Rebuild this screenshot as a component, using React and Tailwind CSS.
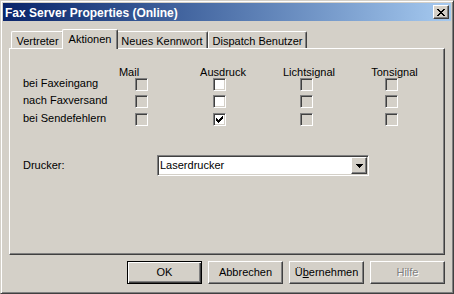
import React from "react";

const raised =
  "border border-t-white border-l-white border-r-[#404040] border-b-[#404040] shadow-[inset_-1px_-1px_#808080]";

function CloseGlyph() {
  const rows = [
    [0, 1, 6, 7],
    [1, 2, 5, 6],
    [2, 3, 4, 5],
    [3, 4],
    [2, 3, 4, 5],
    [1, 2, 5, 6],
    [0, 1, 6, 7],
  ];
  return (
    <svg width="8" height="7" viewBox="0 0 8 7" shapeRendering="crispEdges">
      {rows.map((r, y) =>
        r.map((x) => <rect key={y + "-" + x} x={x} y={y} width="1" height="1" fill="#000" />)
      )}
    </svg>
  );
}

function Checkbox({ checked, disabled }) {
  return (
    <div
      className={
        "w-[13px] h-[13px] border border-t-[#808080] border-l-[#808080] border-r-white border-b-white shadow-[inset_1px_1px_#404040,inset_-1px_-1px_#d4d0c8] flex items-center justify-center " +
        (disabled ? "bg-[#d4d0c8]" : "bg-white")
      }
    >
      {checked && (
        <svg width="7" height="7" viewBox="0 0 7 7" shapeRendering="crispEdges">
          <path
            d="M0 2v3h1v1h1v1h1v-1h1v-1h1v-1h1v-1h1v-3h-1v1h-1v1h-1v1h-1v1h-1v-1h-1v-1h-1z"
            fill="#000"
          />
        </svg>
      )}
    </div>
  );
}

function Tab({ label, width, active }) {
  if (active) {
    return (
      <div
        className={
          "relative z-10 -mx-[2px] -mb-[1px] h-[20px] bg-[#d4d0c8] border-t border-l border-t-white border-l-white border-r border-r-[#404040] shadow-[inset_-1px_0_#808080] rounded-t-[2px] flex justify-center pt-[3px] leading-[12px]"
        }
        style={{ width: width + 4 }}
      >
        {label}
      </div>
    );
  }
  return (
    <div
      className="h-[17px] border-t border-l border-t-white border-l-white border-r border-r-[#404040] shadow-[inset_-1px_0_#808080] rounded-t-[2px] flex justify-center pt-[3px] leading-[12px]"
      style={{ width }}
    >
      {label}
    </div>
  );
}

const rows = [
  { label: "bei Faxeingang", ausdruck: false },
  { label: "nach Faxversand", ausdruck: false },
  { label: "bei Sendefehlern", ausdruck: true },
];

export default function App() {
  return (
    <div className="w-[454px] h-[294px] bg-[#d4d0c8] text-black text-[11px] font-['Liberation_Sans',Arial,sans-serif]">
      <div className="w-full h-full flex flex-col p-[2px] border border-t-[#d4d0c8] border-l-[#d4d0c8] border-r-[#404040] border-b-[#404040] shadow-[inset_1px_1px_#fff,inset_-1px_-1px_#808080]">
        {/* title bar */}
        <div className="h-[18px] flex items-center justify-between pl-[2px] pr-[2px] bg-gradient-to-r from-[#0a246a] to-[#a6caf0]">
          <span className="text-white font-bold text-[12px] leading-[14px] pt-[1px]">
            Fax Server Properties (Online)
          </span>
          <div className={"w-[16px] h-[14px] bg-[#d4d0c8] flex items-center justify-center " + raised}>
            <CloseGlyph />
          </div>
        </div>

        {/* tabs */}
        <div className="mx-[6px] mt-[8px] flex flex-col">
          <div className="flex items-end pl-[2px]">
            <Tab label="Vertreter" width={53} />
            <Tab label="Aktionen" width={52} active />
            <Tab label="Neues Kennwort" width={92} />
            <Tab label="Dispatch Benutzer" width={99} />
          </div>

          <div className="h-[207px] border border-t-white border-l-white border-r-[#404040] border-b-[#404040] shadow-[inset_-1px_-1px_#808080] pl-[13px] pt-[17px]">
            <div className="grid grid-cols-[88px_61px_95px_79px_91px]">
              <div className="h-[12px]" />
              <div className="h-[12px] leading-[12px] text-center pr-[25px]">Mail</div>
              <div className="h-[12px] leading-[12px] text-center pl-[7px]">Ausdruck</div>
              <div className="h-[12px] leading-[12px] text-center pl-[5px]">Lichtsignal</div>
              <div className="h-[12px] leading-[12px] text-center pl-[6px]">Tonsignal</div>

              {rows.map((r, i) => (
                <React.Fragment key={r.label}>
                  <div className={"h-[13px] leading-[11px] whitespace-nowrap " + (i === 0 ? "" : i === 1 ? "mt-[4px]" : "mt-[5px]")}>
                    {r.label}
                  </div>
                  <div className={"flex justify-center " + (i === 0 ? "" : i === 1 ? "mt-[4px]" : "mt-[5px]")}>
                    <Checkbox disabled />
                  </div>
                  <div className={"flex justify-center " + (i === 0 ? "" : i === 1 ? "mt-[4px]" : "mt-[5px]")}>
                    <Checkbox checked={r.ausdruck} />
                  </div>
                  <div className={"flex justify-center " + (i === 0 ? "" : i === 1 ? "mt-[4px]" : "mt-[5px]")}>
                    <Checkbox disabled />
                  </div>
                  <div className={"flex justify-center " + (i === 0 ? "" : i === 1 ? "mt-[4px]" : "mt-[5px]")}>
                    <Checkbox disabled />
                  </div>
                </React.Fragment>
              ))}
            </div>

            <div className="flex items-center mt-[29px]">
              <div className="w-[134px]">Drucker:</div>
              <div className="w-[212px] h-[21px] border border-t-[#808080] border-l-[#808080] border-r-white border-b-white shadow-[inset_1px_1px_#404040,inset_-1px_-1px_#d4d0c8] p-[1px] flex">
                <div className="flex-1 bg-white flex items-center pl-[1px]">Laserdrucker</div>
                <div className={"w-[16px] h-[17px] bg-[#d4d0c8] flex items-center justify-center " + raised}>
                  <svg width="7" height="4" viewBox="0 0 7 4" shapeRendering="crispEdges">
                    <path d="M0 0h7v1h-1v1h-1v1h-1v1h-1v-1h-1v-1h-1v-1h-1z" fill="#000" />
                  </svg>
                </div>
              </div>
            </div>
          </div>

          {/* buttons */}
          <div className="flex justify-end gap-[6px] mt-[6px]">
            <button className="w-[75px] h-[23px] bg-[#d4d0c8] border border-black shadow-[inset_1px_1px_#fff,inset_-1px_-1px_#404040,inset_-2px_-2px_#808080] text-[11px]">
              OK
            </button>
            <button className={"w-[75px] h-[23px] bg-[#d4d0c8] text-[11px] " + raised}>Abbrechen</button>
            <button className={"w-[75px] h-[23px] bg-[#d4d0c8] text-[11px] " + raised}>
              Ü<span className="underline">b</span>ernehmen
            </button>
            <button className={"w-[75px] h-[23px] bg-[#d4d0c8] text-[11px] text-[#808080] [text-shadow:1px_1px_#fff] " + raised}>
              Hilfe
            </button>
          </div>
        </div>
      </div>
    </div>
  );
}
